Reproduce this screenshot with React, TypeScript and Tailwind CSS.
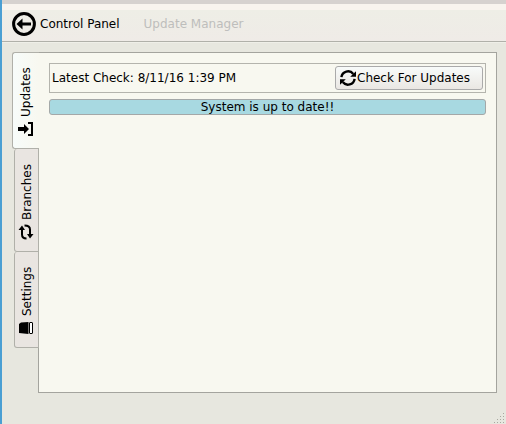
import { useState } from "react";
import type { ReactNode } from "react";

function BackIcon() {
  return (
    <svg className="size-6 shrink-0" viewBox="0 0 24 24" aria-hidden="true">
      <circle cx="12" cy="12" r="10.4" fill="none" stroke="#000" strokeWidth="3" />
      <path d="M4.5 12 10.5 6.4V10.6H19V13.4H10.5V17.6Z" fill="#000" />
    </svg>
  );
}

function RefreshIcon() {
  return (
    <svg className="size-4 shrink-0" viewBox="0 0 16 16" aria-hidden="true">
      <path d="M1.4 7.2A6.7 6.7 0 0 1 13.3 3.9M14.6 8.8A6.7 6.7 0 0 1 2.7 12.1" fill="none" stroke="#000" strokeWidth="2.4" />
      <path d="M16 1.2V6.8H10.2ZM0 14.8V9.2H5.8Z" fill="#000" />
    </svg>
  );
}

function InstallIcon() {
  return (
    <svg className="size-4 shrink-0 rotate-180" viewBox="0 0 16 16" aria-hidden="true">
      <path d="M0 6H6V3L11 8 6 13V10H0Z" fill="#000" />
      <path d="M10 2H14V14H10" fill="none" stroke="#000" strokeWidth="2" />
    </svg>
  );
}

function BranchIcon() {
  return (
    <svg className="size-4 shrink-0 rotate-180" viewBox="0 0 16 16" aria-hidden="true">
      <path d="M8.5 14.5Q4 14.5 4 10.5V4M6.5 1.5Q12 1.5 12 5.5V12" fill="none" stroke="#000" strokeWidth="2" />
      <path d="M.5 6 4 1.5 7 6ZM9 10H15.5L12 14.5Z" fill="#000" />
    </svg>
  );
}

function SettingsIcon() {
  return (
    <svg className="size-4 shrink-0 rotate-180" viewBox="0 0 16 16" aria-hidden="true">
      <path d="M1 4 3 2.5 10.5 2V14L1 13Z" fill="#000" />
      <rect x="11.5" y="2.5" width="3" height="11" rx=".5" fill="#fff" stroke="#000" />
    </svg>
  );
}

const tabs: { name: string; icon: ReactNode; height: string }[] = [
  { name: "Updates", icon: <InstallIcon />, height: "h-[97px]" },
  { name: "Branches", icon: <BranchIcon />, height: "h-[103px]" },
  { name: "Settings", icon: <SettingsIcon />, height: "h-24" },
];

export default function App() {
  const [active, setActive] = useState("Updates");

  return (
    <div className="flex min-h-screen flex-col border-l-2 border-[#4a9fd3] bg-[#e7e7df] text-[12px] leading-4 text-black [font-family:'DejaVu_Sans',sans-serif]">
      <div className="h-1 bg-[#d6d2cf]" />
      <header className="border-b border-[#b0b0a9] bg-[#f8f4ee] pt-1.5 shadow-[0_1px_0_#efefe8]">
        <nav className="flex h-[31px] items-center gap-6 bg-linear-to-b from-[#eeeee6] to-[#efebe7] px-2.5 pb-1">
          <button type="button" className="flex items-center gap-1">
            <BackIcon />
            Control Panel
          </button>
          <button type="button" disabled className="text-[#bebebc]">
            Update Manager
          </button>
        </nav>
      </header>

      <main className="flex flex-1 px-2.5 pt-2.5 pr-[9px]">
        <div role="tablist" aria-orientation="vertical" className="z-10 -mr-px flex flex-col items-end">
          {tabs.map(({ name, icon, height }) => (
            <button
              key={name}
              id={`tab-${name}`}
              role="tab"
              type="button"
              aria-selected={active === name}
              aria-controls="panel"
              onClick={() => setActive(name)}
              className={`flex rotate-180 items-center gap-1 rounded-r-[3px] border border-[#b0b0a9] px-1 pt-[11px] [writing-mode:vertical-rl] ${height} ${
                active === name
                  ? "w-[27px] border-l-0 bg-linear-to-l from-[#f7fcfa] to-[#f8f8f0]"
                  : "w-[25px] border-b-0 bg-[#e9e5e1]"
              }`}
            >
              {icon}
              {name}
            </button>
          ))}
        </div>

        <section
          id="panel"
          role="tabpanel"
          aria-labelledby={`tab-${active}`}
          className="mb-[31px] flex-1 border border-[#a4a49e] bg-[#f8f8f0] p-2.5"
        >
          <div className="flex h-[30px] items-center justify-between border border-[#b4b4ad] px-0.5">
            <span>Latest Check: 8/11/16 1:39 PM</span>
            <button
              type="button"
              className="flex h-6 w-[148px] items-center gap-px rounded-[3px] border border-[#aaa] bg-linear-to-b from-[#f8fbfa] to-[#eae7e3] px-1"
            >
              <RefreshIcon />
              Check For Updates
            </button>
          </div>
          <div role="status" className="mt-1.5 rounded-[3px] border border-[#a4a8a8] bg-[#a8d9e1] text-center leading-[14px]">
            System is up to date!!
          </div>
        </section>
      </main>

      <svg className="absolute right-0 bottom-0 size-3" viewBox="0 0 12 12" aria-hidden="true">
        <path
          d="M9 1h1v1h-1zM6 4h1v1h-1zM9 4h1v1h-1zM3 7h1v1h-1zM6 7h1v1h-1zM9 7h1v1h-1zM0 10h1v1h-1zM3 10h1v1h-1zM6 10h1v1h-1zM9 10h1v1h-1z"
          fill="#a8a8a0"
        />
      </svg>
    </div>
  );
}
